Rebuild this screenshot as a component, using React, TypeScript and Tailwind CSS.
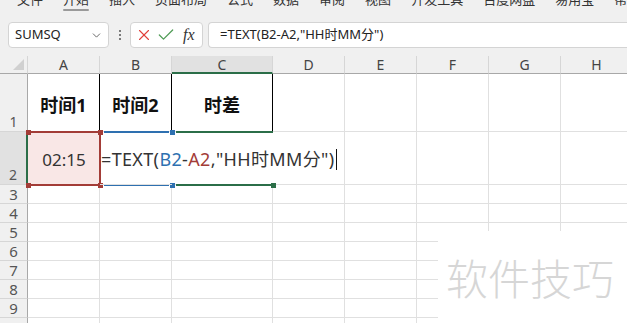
import { ChevronDown, X, Check } from 'lucide-react';

const TABS = ['文件', '开始', '插入', '页面布局', '公式', '数据', '审阅', '视图', '开发工具', '百度网盘', '易用宝', '帮助'];
const COLS = ['A', 'B', 'C', 'D', 'E', 'F', 'G', 'H'];

function Ribbon() {
    return (
        <div className="h-[14px] overflow-hidden">
            <div className="flex gap-[20px] pl-[17px] -mt-[10px] text-[13px] leading-[18px] text-[#333] whitespace-nowrap">
                {TABS.map((t, i) => (
                    <div key={t} className="flex flex-col items-center">
                        <span>{t}</span>
                        {i === 1 && <span className="mt-[1px] h-[2px] w-[26px] bg-[#9a9a9a] rounded" />}
                    </div>
                ))}
            </div>
        </div>
    );
}

function FormulaBar() {
    return (
        <div className="flex items-center h-[26px] mt-[8px] pl-[8px]">
            <div className="flex items-center justify-between w-[101px] h-full rounded-[4px] border border-[#d4d4d4] bg-white pl-[6px] pr-[5px] text-[13px] text-[#222]">
                <span>SUMSQ</span>
                <ChevronDown size={13} strokeWidth={1.6} className="text-[#555]" />
            </div>
            <div className="w-[21px] flex flex-col items-center gap-[2px]">
                <span className="w-[2px] h-[2px] bg-[#555] rounded-full" />
                <span className="w-[2px] h-[2px] bg-[#555] rounded-full" />
                <span className="w-[2px] h-[2px] bg-[#555] rounded-full" />
            </div>
            <div className="flex items-center w-[73px] h-full rounded-[4px] border border-[#d4d4d4] bg-white pl-[4px] gap-[3px]">
                <X size={18} strokeWidth={1.5} className="text-[#e0403a]" />
                <Check size={20} strokeWidth={1.5} className="text-[#4f9b55]" />
                <span className="ml-[4px] font-['Liberation_Serif',serif] italic text-[16px] text-[#333]">fx</span>
            </div>
            <div className="flex-1 ml-[5px] h-full rounded-l-[4px] border border-r-0 border-[#d4d4d4] bg-white pl-[11px] flex items-center text-[13px] text-[#222] whitespace-nowrap">
                =TEXT(B2-A2,"HH时MM分")
            </div>
        </div>
    );
}

function Sheet() {
    const rows = [3, 4, 5, 6, 7, 8, 9, 10];
    return (
        <div className="relative">
            <div className="grid grid-cols-[28px_72px_72px_101px_72px_72px_72px_72px_72px] grid-rows-[18px_58px_53px_repeat(8,19px)] w-[633px]">
                {/* corner */}
                <div className="bg-[#f0f0f0] border-r border-b border-r-[#d6d6d6] border-b-[#a8a8a8] flex items-end justify-end pr-[3px] pb-[3px]">
                    <svg width="11" height="11" viewBox="0 0 11 11">
                        <polygon points="11,0 11,11 0,11" fill="#d0d0d0" />
                    </svg>
                </div>
                {COLS.map((c) => (
                    <div
                        key={c}
                        className={
                            c === 'C'
                                ? 'bg-[#e1e1e1] border-r border-r-[#d6d6d6] border-b-2 border-b-[#2b6e48] flex items-center justify-center text-[14px] text-[#444]'
                                : 'bg-[#f0f0f0] border-r border-r-[#d6d6d6] border-b border-b-[#a8a8a8] flex items-center justify-center text-[14px] text-[#444]'
                        }
                    >
                        {c}
                    </div>
                ))}

                {/* row 1 */}
                <div className="bg-[#f0f0f0] border-r border-b border-r-[#a8a8a8] border-b-[#d6d6d6] flex items-end justify-center text-[14px] leading-[18px] text-[#555]">1</div>
                {['时间1', '时间2', '时差'].map((t) => (
                    <div key={t} className="border-r border-b border-r-black border-b-[#e0e0e0] flex items-center justify-center pt-[6px] text-[18px] font-bold text-[#111]">
                        {t}
                    </div>
                ))}
                {COLS.slice(3).map((c) => (
                    <div key={c} className="border-r border-b border-[#e0e0e0]" />
                ))}

                {/* row 2 */}
                <div className="bg-[#e1e1e1] border-r-2 border-b border-r-[#2b6e48] border-b-[#d6d6d6] flex items-end justify-center text-[14px] leading-[18px] text-[#555]">2</div>
                <div className="bg-[#f9e7e6] border-b border-[#e0e0e0] flex items-center justify-center pt-[3px] text-[17px] text-[#333]">02:15</div>
                <div className="relative z-10 border-b border-[#e0e0e0] flex items-center pl-[1px] pt-[3px] whitespace-nowrap text-[18px] tracking-[0.35px] text-[#333]">
                    <span>=TEXT(</span>
                    <span className="text-[#2e70b0]">B2</span>
                    <span>-</span>
                    <span className="text-[#a33c37]">A2</span>
                    <span>,"HH时MM分")</span>
                    <span className="ml-[2px] w-[1px] h-[21px] bg-[#111] shrink-0" />
                </div>
                <div className="border-b border-[#e0e0e0]" />
                {COLS.slice(3).map((c) => (
                    <div key={c} className="border-r border-b border-[#e0e0e0]" />
                ))}

                {rows.map((r) => (
                    <Row key={r} n={r} />
                ))}
            </div>

            {/* reference highlights */}
            <div className="absolute left-[28px] top-[75px] w-[73px] h-[55px] border-y-2 border-r-2 border-[#a33c37]" />
            <span className="absolute left-[26px] top-[74px] w-[5px] h-[5px] bg-[#a33c37]" />
            <span className="absolute left-[98px] top-[74px] w-[5px] h-[5px] bg-[#a33c37]" />
            <span className="absolute left-[26px] top-[127px] w-[5px] h-[5px] bg-[#a33c37]" />
            <span className="absolute left-[98px] top-[127px] w-[5px] h-[5px] bg-[#a33c37]" />

            <div className="absolute left-[104px] top-[75px] w-[65px] h-[55px] border-y-2 border-[#2e70b0]" />
            <span className="absolute left-[170px] top-[74px] w-[5px] h-[5px] bg-[#2e70b0]" />
            <span className="absolute left-[170px] top-[127px] w-[5px] h-[5px] bg-[#2e70b0]" />

            <div className="absolute left-[176px] top-[75px] w-[97px] h-[55px] border-y-2 border-[#2b6e48]" />
            <span className="absolute left-[271px] top-[127px] w-[5px] h-[5px] bg-[#2b6e48]" />
        </div>
    );
}

function Row({ n }: { n: number }) {
    return (
        <>
            <div className="bg-[#f0f0f0] border-r border-b border-r-[#a8a8a8] border-b-[#d6d6d6] flex items-end justify-center text-[15px] leading-[18px] text-[#555]">
                {n}
            </div>
            {COLS.map((c) => (
                <div key={c} className="border-r border-b border-[#e0e0e0]" />
            ))}
        </>
    );
}

export default function App() {
    return (
        <div className="relative w-[627px] h-[323px] overflow-hidden bg-white font-['Noto_Sans','Noto_Sans_CJK_SC',sans-serif]">
            <div className="bg-[#f0f0f0] h-[56px]">
                <Ribbon />
                <FormulaBar />
            </div>
            <Sheet />

            {/* watermark */}
            <div className="absolute left-[438px] top-[231px] right-0 bottom-0 bg-white pl-[8px] pt-[27px] text-[42px] font-light leading-none text-[#d6d6d6]">
                软件技巧
            </div>
        </div>
    );
}
